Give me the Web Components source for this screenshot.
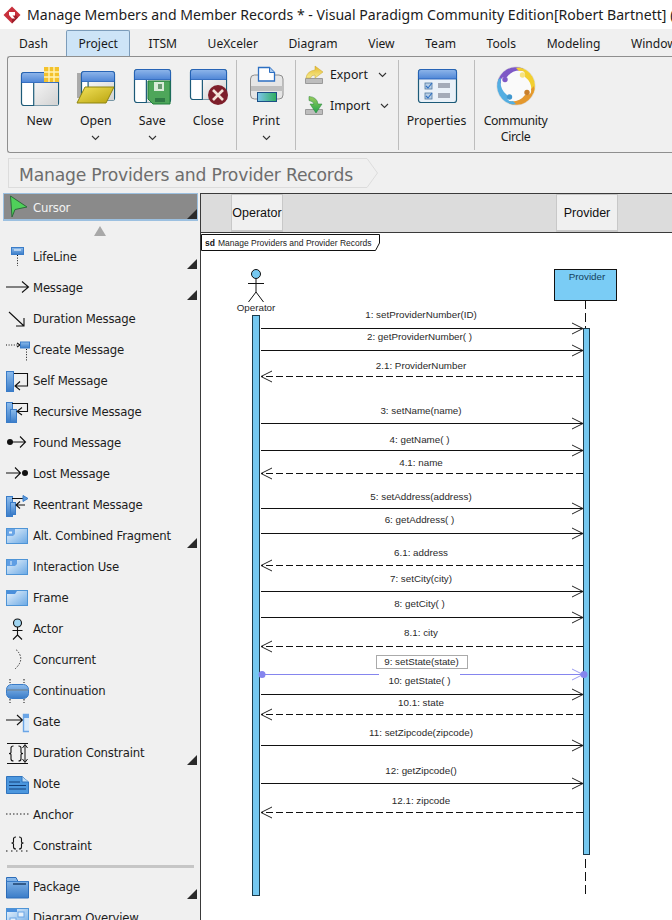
<!DOCTYPE html>
<html><head><meta charset="utf-8"><title>VP</title>
<style>
html,body{margin:0;padding:0;background:#f0f0f0;}
body{width:672px;height:920px;overflow:hidden;font-family:"Noto Sans",sans-serif;}
vp-app{display:block}
</style></head><body>
<vp-app>
  <vp-titlebar>Manage Members and Member Records * - Visual Paradigm Community Edition[Robert Bartnett] (</vp-titlebar>
  <vp-tabs>
    <vp-tab>Dash</vp-tab><vp-tab active>Project</vp-tab><vp-tab>ITSM</vp-tab><vp-tab>UeXceler</vp-tab><vp-tab>Diagram</vp-tab><vp-tab>View</vp-tab><vp-tab>Team</vp-tab><vp-tab>Tools</vp-tab><vp-tab>Modeling</vp-tab><vp-tab>Window</vp-tab>
  </vp-tabs>
  <vp-ribbon>
    <vp-rbtn icon="new" w="56.5">New</vp-rbtn>
    <vp-rbtn icon="open" w="56.5" chevron>Open</vp-rbtn>
    <vp-rbtn icon="save" w="56.5" chevron>Save</vp-rbtn>
    <vp-rbtn icon="close" w="55.5">Close</vp-rbtn>
    <vp-sep></vp-sep>
    <vp-rbtn icon="print" w="58" chevron>Print</vp-rbtn>
    <vp-sep></vp-sep>
    <vp-rstack>
      <vp-srow icon="export" gap="10">Export</vp-srow>
      <vp-srow icon="import" gap="10">Import</vp-srow>
    </vp-rstack>
    <vp-sep></vp-sep>
    <vp-rbtn icon="props" w="75">Properties</vp-rbtn>
    <vp-sep></vp-sep>
    <vp-rbtn icon="circle" w="81" style="letter-spacing:-.4px">Community<br>Circle</vp-rbtn>
  </vp-ribbon>
  <vp-breadcrumb>Manage Providers and Provider Records</vp-breadcrumb>
  <vp-main>
    <vp-palette>
      <vp-cursor>Cursor</vp-cursor>
      <vp-scrollup></vp-scrollup>
      <vp-tool icon="lifeline" corner>LifeLine</vp-tool>
      <vp-tool icon="message" corner>Message</vp-tool>
      <vp-tool icon="duration">Duration Message</vp-tool>
      <vp-tool icon="create">Create Message</vp-tool>
      <vp-tool icon="self">Self Message</vp-tool>
      <vp-tool icon="recursive">Recursive Message</vp-tool>
      <vp-tool icon="found">Found Message</vp-tool>
      <vp-tool icon="lost">Lost Message</vp-tool>
      <vp-tool icon="reentrant">Reentrant Message</vp-tool>
      <vp-tool icon="alt" corner>Alt. Combined Fragment</vp-tool>
      <vp-tool icon="use">Interaction Use</vp-tool>
      <vp-tool icon="frame">Frame</vp-tool>
      <vp-tool icon="actor">Actor</vp-tool>
      <vp-tool icon="concurrent">Concurrent</vp-tool>
      <vp-tool icon="continuation">Continuation</vp-tool>
      <vp-tool icon="gate">Gate</vp-tool>
      <vp-tool icon="dconstraint" corner>Duration Constraint</vp-tool>
      <vp-tool icon="note">Note</vp-tool>
      <vp-tool icon="anchor">Anchor</vp-tool>
      <vp-tool icon="constraint">Constraint</vp-tool>
      <vp-pal-sep></vp-pal-sep>
      <vp-tool icon="package" corner>Package</vp-tool>
      <vp-tool icon="overview">Diagram Overview</vp-tool>
    </vp-palette>
    <vp-diagram></vp-diagram>
  </vp-main>
</vp-app>
<script>
const def=(name,css,html,init)=>{customElements.define(name,class extends HTMLElement{
  connectedCallback(){ if(this.shadowRoot)return; const r=this.attachShadow({mode:'open'});
    r.innerHTML=`<style>${css}</style>${typeof html==='function'?html(this):html}`; if(init)init(this,r);} });};

const DEFS=`<defs>
<linearGradient id="bar" x1="0" y1="0" x2="0" y2="1"><stop offset="0" stop-color="#8fb6ea"/><stop offset="1" stop-color="#4f86d6"/></linearGradient>
<linearGradient id="pane" x1="0" y1="0" x2="1" y2="1"><stop offset="0" stop-color="#f4f4f4"/><stop offset="1" stop-color="#d2d2d2"/></linearGradient>
<linearGradient id="blue" x1="0" y1="0" x2="1" y2="1"><stop offset="0" stop-color="#eaf4fd"/><stop offset="1" stop-color="#6aa8e4"/></linearGradient>
<linearGradient id="blue2" x1="0" y1="0" x2="0" y2="1"><stop offset="0" stop-color="#8dbcec"/><stop offset="1" stop-color="#3a7cc8"/></linearGradient>
<linearGradient id="folder" x1="0" y1="0" x2="1" y2="1"><stop offset="0" stop-color="#f2e25a"/><stop offset="1" stop-color="#b9a30e"/></linearGradient>
<linearGradient id="tray" x1="0" y1="0" x2="1" y2="0"><stop offset="0" stop-color="#7ec5ee"/><stop offset="1" stop-color="#2fae5c"/></linearGradient>
<linearGradient id="arrowY" x1="0" y1="0" x2="0" y2="1"><stop offset="0" stop-color="#e8b92c"/><stop offset="1" stop-color="#f4ea8e"/></linearGradient>
<linearGradient id="arrowG" x1="0" y1="0" x2="0" y2="1"><stop offset="0" stop-color="#9acb5c"/><stop offset="1" stop-color="#1fa54a"/></linearGradient>
</defs>`;
const win=(x,y,w,h,split=.33)=>`<rect x="${x+.5}" y="${y+.5}" width="${w}" height="${h}" rx="2.5" fill="#fff" stroke="#1c5a78" stroke-width="1.2"/>
<rect x="${x+1+w*split}" y="${y+11}" width="${w-w*split-1}" height="${h-10.5}" fill="url(#pane)"/>
<path d="M${x+.5} ${y+10.5}V${y+3}a2.5 2.5 0 0 1 2.5-2.5h${w-5}a2.5 2.5 0 0 1 2.5 2.5V${y+10.5}Z" fill="url(#bar)" stroke="#1c5bb8" stroke-width=".8"/>
<path d="M${x+w*split+.5} ${y+11}V${y+h}" stroke="#1c5a78" stroke-width="1.2"/>`;
const swoosh=(rot,c,h)=>`<g transform="rotate(${rot} 24 24)"><path d="M5.500 21A18.700 18.700 0 0 1 31 6.500L32 9Q21 7 15 15L12 15Q8 16 9 21L6 24Z" fill="${c}"/><circle cx="13" cy="17.500" r="2.700" fill="${h}"/></g>`;

const RIBBON_ICONS={
 new:win(6,10,37,33)+`<rect x="29" y="5" width="15" height="15" fill="#f3c22c"/><path d="M34 5v15M39 5v15M29 10h15M29 15h15" stroke="#fff2b8" stroke-width="1.4"/>`,
 open:`<rect x="5" y="11" width="4" height="25" fill="#aaa"/>`+win(9,9,33,29,.2)+`<path d="M5 41 L13 25 H42 L34 41Z" fill="url(#folder)" stroke="#8d8410" stroke-width="1"/>`,
 save:win(6,7,36,33)+`<path d="M20 19H42V42H25L20 37Z" fill="#4ea65a" stroke="#1f7f3a"/><rect x="26" y="20" width="10" height="9" fill="#d8ecd8"/><rect x="30" y="22" width="4" height="5" fill="#6a9a72"/><rect x="27" y="36" width="10" height="4" fill="#2f7a45"/>`,
 close:win(6,7,36,30)+`<circle cx="34" cy="33" r="10" fill="#7e1f2b"/><path d="M29 28 L39 38M39 28 L29 38" stroke="#f3e4d8" stroke-width="2.6"/>`,
 print:`<path d="M8.500 33V17q0-4 4-4H37q4 0 4 4V33q0 4-4 4H12.500q-4 0-4-4Z" fill="#e6e6e6" stroke="#8e8e8e"/><rect x="9" y="24" width="32" height="5" fill="#bfbfbf"/>
 <path d="M16.500 19V5.500h11l5 5V19Z" fill="#fff" stroke="#2c6fc2" stroke-width="1.300"/><path d="M27.500 5.500v5h5" fill="#a9caef" stroke="#2c6fc2"/>
 <rect x="15.500" y="30.500" width="19" height="9" fill="url(#tray)" stroke="#1d4f86"/>`,
 props:`<rect x="5.500" y="7.500" width="38" height="33" rx="2.500" fill="#eaf1f8" stroke="#1c5a78" stroke-width="1.2"/><path d="M5.500 17V10a2.500 2.500 0 0 1 2.500-2.500h33a2.500 2.500 0 0 1 2.500 2.500V17Z" fill="url(#bar)" stroke="#1c5bb8" stroke-width=".8"/>
 <rect x="12" y="21" width="7" height="6" fill="#b8cfe6" stroke="#5079a0" stroke-width=".8"/><rect x="12" y="31" width="7" height="6" fill="#b8cfe6" stroke="#5079a0" stroke-width=".8"/><path d="M13 24l2 2 4-5M13 34l2 2 4-5" fill="none" stroke="#2c6fc2" stroke-width="1.1"/>
 <rect x="25" y="21" width="12" height="5" fill="#a4abb8"/><rect x="25" y="31" width="12" height="5" fill="#a4abb8"/>`,
 circle:`<circle cx="24" cy="24" r="19" fill="#fafafa" stroke="#d0d0d0" stroke-width=".8"/>`+swoosh(0,'#7e58c6','#7e58c6')+swoosh(90,'#f2cf30','#f7e37e')+swoosh(180,'#e4982e','#c97f2a')+swoosh(270,'#53aee2','#3f97cf'),
 export:`<path d="M1.500 14.500h17v5h-17Z" fill="#bdbdbd" stroke="#9a9a9a"/><path d="M2 14Q3 7 11 6V2l8 6-8 6v-3Q7 11 6.500 14Z" fill="url(#arrowY)" stroke="#c9a528" stroke-width=".5"/>`,
 import:`<path d="M1.500 14.500h17v5h-17Z" fill="#bdbdbd" stroke="#9a9a9a"/><path d="M5 1.500Q13 2 14 9h4l-6 9-6-9h4Q9 6 5 5.500Z" fill="url(#arrowG)" stroke="#22803a" stroke-width=".5"/>`
};

const L=`stroke="#111" fill="none" stroke-width="1.1"`;
const fr=(tab)=>`<rect x="1.500" y="5.500" width="21" height="15" fill="url(#blue)" stroke="#4e94d6"/>${tab}`;
const brace=(x,y,h,dir)=>{const d=dir*2.5;return `M${x+d} ${y}q${-d} 0 ${-d} 2v${h/2-3}q0 1 ${-d*.8} 1q${d*.8} 0 ${d*.8} 1v${h/2-3}q0 2 ${d} 2`};
const TOOL_ICONS={
 lifeline:`<rect x="6.500" y="3.500" width="12" height="7" fill="url(#blue2)" stroke="#3a7cc8"/><path d="M9 6h7" stroke="#fff"/><path d="M12.500 11v11" stroke="#111" stroke-dasharray="1 1.600"/>`,
 message:`<path d="M1 12H23M17 6.500 23.500 12 17 17.500" ${L}/>`,
 duration:`<path d="M4 6 19 20M19 12V20H11" ${L}/>`,
 create:`<path d="M1 8H14" stroke="#111" stroke-dasharray="1 1.600"/><path d="M12 6l3 2-3 2" ${L}/><rect x="15.500" y="5" width="9" height="6" fill="url(#blue2)" stroke="#3a7cc8"/><path d="M21.500 12V25" stroke="#111" stroke-dasharray="1 1.600"/>`,
 self:`<rect x="1.500" y="3.500" width="7" height="20" fill="url(#blue2)" stroke="#3a7cc8"/><path d="M9 5.500H22.500V18H10M15 13.500 10 18 15 22" ${L}/>`,
 recursive:`<rect x="1.500" y="3.500" width="6" height="20" fill="url(#blue2)" stroke="#3a7cc8"/><rect x="5.500" y="10.500" width="6" height="13" fill="url(#blue2)" stroke="#3a7cc8"/><path d="M7 4.500H22.500V12.500H12M17 8.500 12 12.500 17 16" ${L}/>`,
 found:`<circle cx="5" cy="12" r="3" fill="#111"/><path d="M5 12H20M15 6.500 20.500 12 15 17.500" ${L}/>`,
 lost:`<path d="M1 12H15M10 6.500 15.500 12 10 17.500" ${L}/><circle cx="20" cy="12" r="3" fill="#111"/>`,
 reentrant:`<rect x="1.500" y="4.500" width="6" height="20" fill="url(#blue2)" stroke="#3a7cc8"/><rect x="5.500" y="10.500" width="5" height="12" fill="url(#blue2)" stroke="#3a7cc8"/><path d="M7 6.500H20M11 13H20M15 9.500 11 13 15 16.500" ${L}/><path d="M18 3.500 23 6.500 18 9.500Z" fill="#5b9bdc" stroke="#3a7cc8"/>`,
 alt:fr(`<path d="M2 6h8v5l-2 2H2Z" fill="#6aa5e6"/><path d="M4 9.500h3" stroke="#e8f2fb" stroke-width="2"/>`),
 use:fr(`<path d="M2 6h10v4l-2 2H2Z" fill="#5f9ee4"/><path d="M6 7v4" stroke="#e8f2fb"/>`),
 frame:fr(`<path d="M2 6h10l-2 3H2Z" fill="#4a8fdc"/>`),
 actor:`<circle cx="12.500" cy="7" r="4" fill="#9fd4f0" stroke="#111" stroke-width="1.1"/><path d="M12.500 11V19M7.500 14.500H17.500M12.500 19 8 23.500M12.500 19 17 23.500" ${L}/>`,
 concurrent:`<path d="M11 2.500Q21 12 10 22" fill="none" stroke="#333" stroke-dasharray="1.500 1.500"/>`,
 continuation:`<path d="M5 1V5M19 1V5M5 21V25M19 21V25" stroke="#111" stroke-dasharray="1.500 1.500"/><rect x="1.500" y="6.500" width="22" height="14" rx="5" fill="url(#blue2)" stroke="#3a7cc8"/><rect x="2" y="11" width="21" height="2" fill="#6d8fb0"/>`,
 gate:`<path d="M1 11H17M12 6 17.500 11 12 16" ${L}/><path d="M24 5.500H18.500V22.500H24" fill="#d8eafb" stroke="#6aa5e6" stroke-width="1.400"/><rect x="19" y="5" width="5" height="4" fill="#6aa5e6"/>`,
 dconstraint:`<path d="M2 3.500H23M2 23.500H23" stroke="#111"/><path d="${brace(6,6,15,1)}${brace(16,6,15,-1)}" ${L}/><path d="M20 5V22M17.500 8 20 4.500 22.500 8M17.500 19 20 22.500 22.500 19" fill="none" stroke="#111"/>`,
 note:`<path d="M1.500 5.500H17L23.500 11V22.500H1.500Z" fill="#4c97de" stroke="#2f73bd"/><path d="M17 5.500V11H23.500" fill="#bcdcf6" stroke="#2f73bd"/><path d="M4 11H15M4 14.500H21M4 18H21" stroke="#123e78"/>`,
 anchor:`<path d="M1 12H24" stroke="#222" stroke-dasharray="1.500 2"/>`,
 constraint:`<path d="M1 18H25" stroke="#111" stroke-dasharray="1.500 3.500"/><path d="${brace(8.500,4,12,1)}${brace(16.500,4,12,-1)}" ${L} stroke-width="1.400"/>`,
 package:`<path d="M1.500 5.500V3.500H11L13 7.500H23.500V24H1.500Z" fill="url(#blue2)" stroke="#2c6cb8"/><path d="M1.500 7.500H23.500" stroke="#3a7cc8"/><path d="M8 10H21" stroke="#10315c" stroke-width="1.300"/>`,
 overview:`<rect x="1.500" y="3.500" width="22" height="18" fill="url(#blue)" stroke="#4e94d6"/><rect x="2" y="4" width="10" height="3" fill="#4a8fdc"/><rect x="13" y="7" width="6" height="5" fill="#e6f1fb" stroke="#6aa5e6"/><rect x="5" y="13" width="6" height="5" fill="#e6f1fb" stroke="#6aa5e6"/>`
};

const chev=`<svg width="9" height="6" viewBox="0 0 9 6"><path d="M1 1 4.500 4.500 8 1" fill="none" stroke="#333" stroke-width="1.100"/></svg>`;

def('vp-titlebar',`:host{display:flex;align-items:center;height:29px;background:#fff;overflow:hidden;white-space:nowrap;color:#1c1c1c;font:14.100px "Noto Sans",sans-serif}
 svg{flex:none;margin:0 6px 0 3px}`,
 `<svg width="18" height="18" viewBox="0 0 18 18"><path d="M9 .5 17.500 9 9 17.500 .5 9Z" fill="#c8303c"/><path d="M9 12.500 12.500 9 15 11.500 9 17.500Z" fill="#9c1f2c"/><path d="M6 6h6v3.500H9.500L12 12.500H9L6 9Z" fill="#fff"/></svg><span><slot></slot></span>`);

def('vp-tabs',`:host{display:flex;height:27px;padding-left:7px;background:#f0f0f0;overflow:hidden;align-items:flex-end}`,`<slot></slot>`);
def('vp-tab',`:host{display:flex;flex:none;align-items:center;height:26px;padding:0 12px;margin-right:6.600px;font:12.100px "Noto Sans",sans-serif;color:#1a1a1a;box-sizing:border-box}
 :host([active]){background:#cde4f7;border:1px solid #7c9cba;border-bottom:none;border-radius:2px 2px 0 0;padding:0 11px}`,`<slot></slot>`);

def('vp-ribbon',`:host{display:flex;box-sizing:border-box;height:97px;margin-left:7px;padding-left:3px;border-top:1px solid #8f8f8f;border-left:1px solid #8f8f8f;border-bottom:1px solid #8f8f8f;border-radius:3px 0 0 3px;font:12.300px/16px "Noto Sans",sans-serif;color:#1a1a1a}`,`<slot></slot>`);
def('vp-sep',`:host{display:block;flex:none;width:1px;margin:3px 0 2px;background:#bdbdbd}`,``);
def('vp-rbtn',`:host{display:flex;flex:none;flex-direction:column;align-items:center;text-align:center;box-sizing:border-box}
 svg.i{display:block;margin-top:5px} .l{margin-top:3px} .c{height:16px;margin-top:1px;display:flex;align-items:center;justify-content:center}`,
 h=>{const n=h.getAttribute('icon');h.style.width=h.getAttribute('w')+'px';
  return `<svg class="i" width="48" height="48" viewBox="0 0 48 48">${DEFS}${RIBBON_ICONS[n]}</svg><div class="l"><slot></slot></div>${h.hasAttribute('chevron')?`<div class="c">${chev}</div>`:''}`});
def('vp-rstack',`:host{display:flex;flex:none;flex-direction:column;width:102px;box-sizing:border-box;padding:6px 0 0 8px;gap:7px}`,`<slot></slot>`);
def('vp-srow',`:host{display:flex;align-items:center;height:24px;}
 svg.i{flex:none;margin-right:2px} .c{display:flex;align-items:center}`,
 h=>`<svg class="i" width="24" height="22" viewBox="0 0 24 22">${DEFS}${RIBBON_ICONS[h.getAttribute('icon')]}</svg><slot></slot><span class="c" style="margin-left:${h.getAttribute('gap')}px">${chev}</span>`);

def('vp-breadcrumb',`:host{display:block;padding:5px 0 5px 8px}
 .b{display:flex;height:30px}
 .t{box-sizing:border-box;height:30px;padding:3px 0 0 10px;display:flex;align-items:center;border:1px solid #dcdcdc;border-right:none;font:17.200px "DejaVu Sans",sans-serif;color:#6d6d6d;white-space:nowrap;width:358px;letter-spacing:-.2px}
 svg{flex:none;display:block}`,
 `<div class="b"><div class="t"><slot></slot></div><svg width="12" height="30" viewBox="0 0 12 30"><path d="M0 .5 1 .5 11.500 15 1 29.500 0 29.500" fill="none" stroke="#dcdcdc"/></svg></div>`);

def('vp-main',`:host{display:flex;height:727px;overflow:hidden}`,`<slot></slot>`);
def('vp-palette',`:host{display:block;flex:none;width:200px;height:727px;overflow:hidden;font:11.700px "DejaVu Sans",sans-serif;color:#1c1c1c;letter-spacing:-.2px}`,`<slot></slot>`);
const CORNER=`<svg class="k" width="10" height="10" viewBox="0 0 10 10"><path d="M0 10 10 0V10Z" fill="#2a2a2a"/></svg>`;
def('vp-cursor',`:host{display:flex;position:relative;align-items:center;box-sizing:border-box;height:28px;margin:0 2px 0 3px;background:#8a8a8a;border:1px solid #9cc0e0;border-width:1px 1px 2px 1px;color:#f2f2f2}
 span{padding-top:2px} svg.i{flex:none;margin:0 4px 0 4px} .k{position:absolute;right:0;bottom:0}`,
 `<svg class="i" width="21" height="24" viewBox="0 0 21 24"><path d="M2.500 1 19 12 7 14.500 4 22Z" fill="#4fd05a" stroke="#2d6a3a"/></svg><span><slot></slot></span>${CORNER}`);
def('vp-scrollup',`:host{display:flex;height:20px;justify-content:center}svg{margin-top:5px}`,`<svg width="12" height="10" viewBox="0 0 12 10"><path d="M6 0 12 10H0Z" fill="#a8a8a8"/></svg>`);
def('vp-tool',`:host{display:flex;position:relative;align-items:center;height:31px;white-space:nowrap}
 svg.i{flex:none;margin:0 3px 0 5px} .k{position:absolute;right:3px;bottom:3px}`,
 h=>`<svg class="i" width="25" height="26" viewBox="0 0 25 26">${DEFS}${TOOL_ICONS[h.getAttribute('icon')]}</svg><slot></slot>${h.hasAttribute('corner')?CORNER:''}`);
def('vp-pal-sep',`:host{display:flex;align-items:center;height:10px;padding:0 6px 0 7px}i{display:block;flex:1;height:3px;background:#c6c6c6}`,`<i></i>`);

const MSGS=[
 [328,314,'1: setProviderNumber(ID)'],[350,336,'2: getProviderNumber( )'],[376,365,'2.1: ProviderNumber',1],
 [423,410,'3: setName(name)'],[450,439,'4: getName( )'],[473,462,'4.1: name',1],
 [508,496,'5: setAddress(address)'],[533,519,'6: getAddress( )'],[565,552,'6.1: address',1],
 [591,578,'7: setCity(city)'],[617,603,'8: getCity( )'],[646,632,'8.1: city',1],
 [694,680,'10: getState( )'],[714,702,'10.1: state',1],
 [745,732,'11: setZipcode(zipcode)'],[783,770,'12: getZipcode()'],[812,800,'12.1: zipcode',1]];
const X0=261,X1=583,CX=421;
const label=(t,y)=>`<text x="${t.includes('( )')?CX-1.5:CX}" y="${y+3.500}" text-anchor="middle" class="m" fill="#2a2a2a">${t}</text>`;
const msgSvg=MSGS.map(([y,ly,t,ret])=>{
 const yy=y+.5;
 return ret?`<path d="M${X1} ${yy}H${X0}" stroke="#111" stroke-dasharray="7 3"/><path d="M${X0+11} ${yy-5.500}L${X0} ${yy}L${X0+11} ${yy+5.500}" fill="none" stroke="#222"/>`+label(t,ly)
 :`<path d="M${X0} ${yy}H${X1}" stroke="#111"/><path d="M${X1-11} ${yy-5.500}L${X1} ${yy}L${X1-11} ${yy+5.500}" fill="none" stroke="#222"/>`+label(t,ly);
}).join('');

def('vp-diagram',`:host{display:block;flex:1;min-width:0;height:727px;background:#fff;overflow:hidden;box-sizing:border-box}
 .strip{display:flex;box-sizing:border-box;height:40px;background:#dcdcdc;border-top:1px solid #3a3a3a;border-bottom:1px solid #3a3a3a;border-left:1px solid #3a3a3a;padding-left:30px;font:12.500px "Liberation Sans",sans-serif;color:#111}
 .cell{display:flex;flex:none;align-items:center;justify-content:center;box-sizing:border-box;background:#f0f0f0;border:1px solid #c8c8c8;border-width:1px 1px 2px 1px}
 .gap{flex:none;width:273px}
 svg{display:block}
 .m{font:9.800px "Liberation Sans",sans-serif}
 .s{font:8.500px "Liberation Sans",sans-serif}`,
 `<div class="strip"><div class="cell" style="width:52px">Operator</div><div class="gap"></div><div class="cell" style="width:62px">Provider</div></div>
 <svg width="472" height="687" viewBox="200 233 472 687">
  <path d="M200.500 233V920" stroke="#3a3a3a"/>
  <path d="M201.500 234.500H379.500V243L375.500 250.500H201.500Z" fill="#fff" stroke="#111"/>
  <text x="205" y="245.500" class="s" fill="#111" style="font-weight:700">sd</text>
  <text x="218" y="245.500" class="s" fill="#222">Manage Providers and Provider Records</text>
  <circle cx="256" cy="274" r="4.500" fill="#75c8f0" stroke="#111"/>
  <path d="M256 279V292M248 283.500H264M256 292 248.500 302M256 292 263.500 302" fill="none" stroke="#111"/>
  <text x="256" y="311" text-anchor="middle" class="m" fill="#2a2a2a">Operator</text>
  <path d="M585.500 300V897" stroke="#111" stroke-dasharray="9 4"/>
  <rect x="554.500" y="269.500" width="62" height="31" fill="#7accf5" stroke="#111"/>
  <text x="587" y="280" text-anchor="middle" class="m" fill="#14405c">Provider</text>
  <rect x="252.500" y="315.500" width="7" height="580" fill="#75c8f0" stroke="#1a3a4a"/>
  <rect x="583.500" y="328.500" width="6" height="526" fill="#75c8f0" stroke="#1a3a4a"/>
  ${msgSvg}
  <path d="M261 674.500H379M460 674.500H583" stroke="#8585ee" stroke-width="1.200"/>
  <path d="M572 669 583 674.500 572 680" fill="none" stroke="#9a9af0"/>
  <circle cx="262" cy="674.500" r="3.500" fill="#8585ee"/><circle cx="584" cy="674.500" r="3.500" fill="#8585ee"/>
  <rect x="376.500" y="655.500" width="91" height="13" fill="#fff" stroke="#aaa"/>
  <text x="421.500" y="665" text-anchor="middle" class="m" fill="#2a2a2a">9: setState(state)</text>
 </svg>`);
</script>
</body></html>
